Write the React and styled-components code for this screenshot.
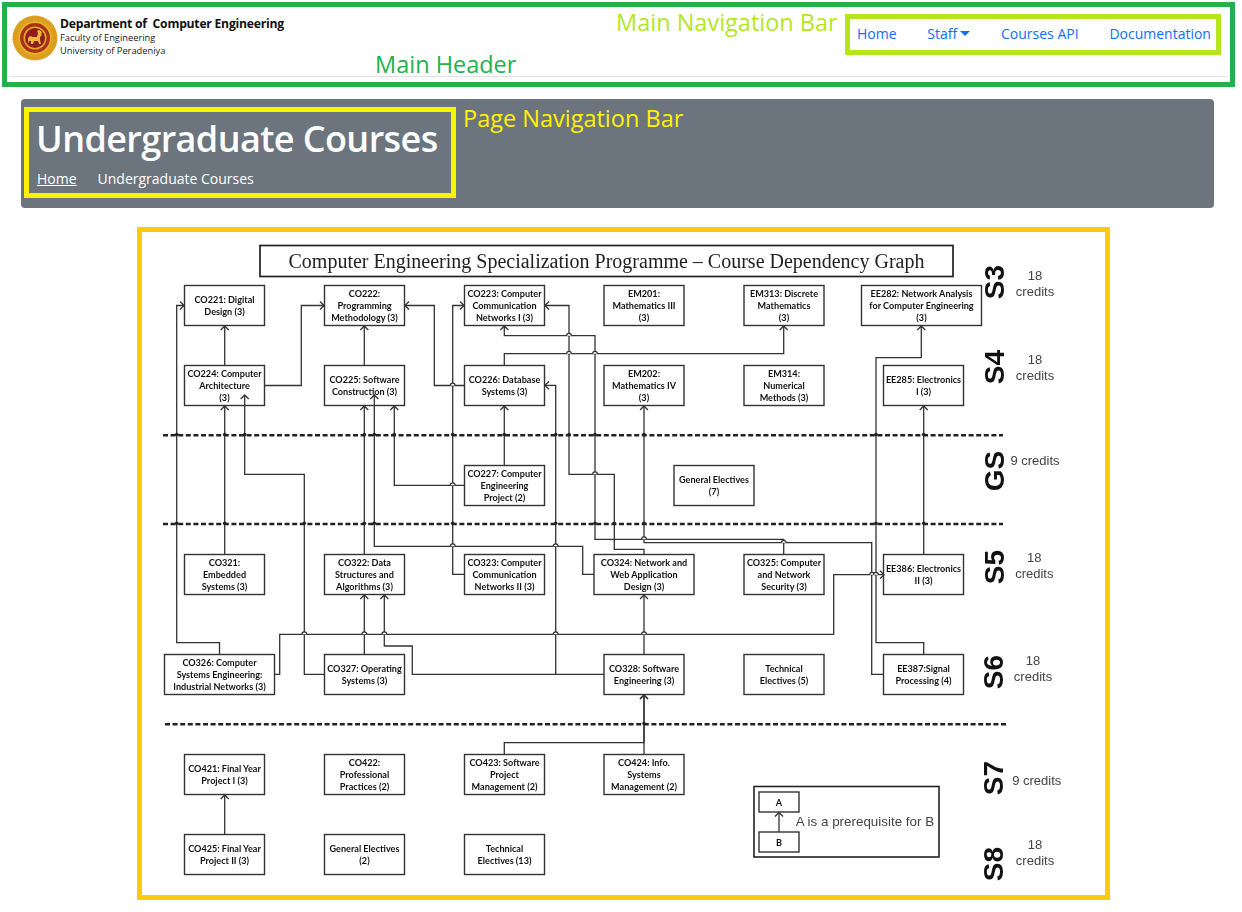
import React from 'react';
import styled, { createGlobalStyle } from 'styled-components';

const GlobalStyle = createGlobalStyle`
  html, body { margin: 0; padding: 0; background: #fff; }
  body { font-family: "Open Sans", "Noto Sans", sans-serif; }
  * { box-sizing: border-box; }
`;

const Page = styled.div`
  width: 1242px;
  height: 912px;
  overflow: hidden;
  padding-top: 2px;
`;

const MainHeader = styled.header`
  position: relative;
  width: 1233px;
  height: 85px;
  margin-left: 2px;
  border: 5px solid #22b14c;
  padding: 0 3px;
`;

const HeaderInner = styled.div`
  display: flex;
  justify-content: space-between;
  align-items: flex-start;
  height: 70px;
  border-bottom: 1px solid #dee2e6;
`;

const Brand = styled.div`
  display: flex;
  gap: 2px;
  padding: 8px 0 0 2px;
`;

const BrandText = styled.div`
  padding-top: 1px;
  color: #222;
  font-size: 9.3px;
  line-height: 13px;
`;

const BrandTitle = styled.div`
  color: #111;
  font-size: 12.2px;
  font-weight: 700;
  line-height: 15px;
  letter-spacing: -0.25px;
  white-space: pre;
`;

const NavBar = styled.nav`
  display: flex;
  align-items: center;
  justify-content: space-between;
  width: 376px;
  height: 41px;
  margin: 7px 6px 0 0;
  padding: 0 5px 3px 7px;
  border: 5px solid #b5e61d;
`;

const NavLink = styled.a`
  display: flex;
  align-items: center;
  gap: 3px;
  color: #0d6efd;
  font-size: 14px;
  white-space: nowrap;
`;

const Caret = styled.span`
  width: 0;
  height: 0;
  border-top: 5px solid #0d6efd;
  border-left: 5px solid transparent;
  border-right: 5px solid transparent;
`;

const Note = styled.div`
  position: absolute;
  color: ${(p) => p.$color};
  font-size: 23.5px;
  line-height: 30px;
  white-space: nowrap;
`;

const HeaderNote = styled(Note)`
  left: 368px;
  top: 42px;
`;

const NavNote = styled(Note)`
  left: 609px;
  top: 0;
`;

const BarNote = styled(Note)`
  left: 442px;
  top: 4px;
`;

const PageBar = styled.section`
  position: relative;
  width: 1193px;
  height: 109px;
  margin: 12px 0 0 21px;
  padding: 8px 0 0 3px;
  border-radius: 4px;
  background: #6c757d;
`;

const TitleBox = styled.div`
  width: 432px;
  height: 91px;
  padding: 6px 0 0 8px;
  border: 5px solid #fff200;
`;

const PageTitle = styled.h1`
  margin: 0 0 0 -1px;
  color: #fff;
  font-size: 36px;
  font-weight: 600;
  line-height: 42px;
  letter-spacing: -0.6px;
  white-space: nowrap;
`;

const Crumbs = styled.div`
  display: flex;
  gap: 21px;
  margin-top: 9px;
  color: #fff;
  font-size: 14px;
  line-height: 20px;
`;

const CrumbLink = styled.a`
  color: #fff;
  text-decoration: underline;
`;

const GraphFrame = styled.figure`
  width: 973px;
  height: 673px;
  margin: 19px 0 0 137px;
  border: 5px solid #ffc90e;
  background: #fff;
`;

const GraphSvg = styled.svg`
  display: block;
  width: 963px;
  height: 663px;
  filter: blur(0.35px);
`;

const CourseText = styled.text`
  fill: #111;
  font-family: Lato, "Open Sans", sans-serif;
  font-size: 9.1px;
  font-weight: 700;
  text-anchor: middle;
`;

const GraphTitle = styled.text`
  fill: #222;
  font-family: "Liberation Serif", serif;
  font-size: 20px;
  text-anchor: middle;
`;

const SemesterText = styled.text`
  fill: #111;
  font-family: "Liberation Sans", sans-serif;
  font-size: 28px;
  font-weight: 700;
  text-anchor: middle;
  dominant-baseline: central;
`;

const CreditText = styled.text`
  fill: #444;
  font-family: "Liberation Sans", sans-serif;
  font-size: 13px;
  text-anchor: middle;
  dominant-baseline: central;
`;

const LegendText = styled.text`
  fill: #444;
  font-family: "Liberation Sans", sans-serif;
  font-size: 13.4px;
  dominant-baseline: central;
`;

const col = [184.5, 324.5, 464.5, 604, 744];
const row = [285.5, 365.5, 465.5, 554.5, 654.5, 754.5, 834.5];

const courses = [
  { x: col[0], y: row[0], lines: ['CO221: Digital', 'Design (3)'] },
  { x: col[1], y: row[0], lines: ['CO222:', 'Programming', 'Methodology (3)'] },
  { x: col[2], y: row[0], lines: ['CO223: Computer', 'Communication', 'Networks I (3)'] },
  { x: col[3], y: row[0], lines: ['EM201:', 'Mathematics III', '(3)'] },
  { x: col[4], y: row[0], lines: ['EM313: Discrete', 'Mathematics', '(3)'] },
  { x: 861.5, y: row[0], w: 120, lines: ['EE282: Network Analysis', 'for Computer Engineering', '(3)'] },
  { x: col[0], y: row[1], lines: ['CO224: Computer', 'Architecture', '(3)'] },
  { x: col[1], y: row[1], lines: ['CO225: Software', 'Construction (3)'] },
  { x: col[2], y: row[1], lines: ['CO226: Database', 'Systems (3)'] },
  { x: col[3], y: row[1], lines: ['EM202:', 'Mathematics IV', '(3)'] },
  { x: col[4], y: row[1], lines: ['EM314:', 'Numerical', 'Methods (3)'] },
  { x: 883.5, y: row[1], lines: ['EE285: Electronics', 'I (3)'] },
  { x: col[2], y: row[2], lines: ['CO227: Computer', 'Engineering', 'Project (2)'] },
  { x: 674, y: row[2], lines: ['General Electives', '(7)'] },
  { x: col[0], y: row[3], lines: ['CO321:', 'Embedded', 'Systems (3)'] },
  { x: col[1], y: row[3], lines: ['CO322: Data', 'Structures and', 'Algorithms (3)'] },
  { x: col[2], y: row[3], lines: ['CO323: Computer', 'Communication', 'Networks II (3)'] },
  { x: col[3] - 10, y: row[3], lines: ['CO324: Network and', 'Web Application', 'Design (3)'], w: 100 },
  { x: col[4], y: row[3], lines: ['CO325: Computer', 'and Network', 'Security (3)'] },
  { x: 883.5, y: row[3], lines: ['EE386: Electronics', 'II (3)'] },
  { x: 164.5, y: row[4], w: 110, lines: ['CO326: Computer', 'Systems Engineering:', 'Industrial Networks (3)'] },
  { x: col[1], y: row[4], lines: ['CO327: Operating', 'Systems (3)'] },
  { x: col[3], y: row[4], lines: ['CO328: Software', 'Engineering (3)'] },
  { x: col[4], y: row[4], lines: ['Technical', 'Electives (5)'] },
  { x: 883.5, y: row[4], lines: ['EE387:Signal', 'Processing (4)'] },
  { x: col[0], y: row[5], lines: ['CO421: Final Year', 'Project I (3)'] },
  { x: col[1], y: row[5], lines: ['CO422:', 'Professional', 'Practices (2)'] },
  { x: col[2], y: row[5], lines: ['CO423: Software', 'Project', 'Management (2)'] },
  { x: col[3], y: row[5], lines: ['CO424: Info.', 'Systems', 'Management (2)'] },
  { x: col[0], y: row[6], lines: ['CO425: Final Year', 'Project II (3)'] },
  { x: col[1], y: row[6], lines: ['General Electives', '(2)'] },
  { x: col[2], y: row[6], lines: ['Technical', 'Electives (13)'] },
];

// every wire ends in the course it points at, [x, y] pairs in page pixels
const wires = [
  [[219.5, 654], [219.5, 642.7], [176.7, 642.7], [176.7, 305.5], [184, 305.5]],
  [[224.7, 365], [224.7, 326]],
  [[265, 385.5], [301.3, 385.5], [301.3, 305.5], [324, 305.5]],
  [[364.3, 365], [364.3, 326]],
  [[464, 385.5], [434.3, 385.5], [434.3, 305.5], [405, 305.5]],
  [[464, 574.3], [452.7, 574.3], [452.7, 305.5], [464, 305.5]],
  [[644, 554], [644, 549.3], [614.3, 549.3], [614.3, 474.3], [569, 474.3], [569, 305.5], [545, 305.5]],
  [[783.7, 554], [783.7, 539.3], [595, 539.3], [595, 335.7], [504.3, 335.7], [504.3, 326]],
  [[884, 674.3], [871.7, 674.3], [871.7, 542.7], [644, 542.7], [644, 406]],
  [[923.7, 654], [923.7, 642.7], [876, 642.7], [876, 357.7], [921.3, 357.7], [921.3, 326]],
  [[923.7, 554], [923.7, 406]],
  [[275, 674.3], [279.7, 674.3], [279.7, 634.3], [833.7, 634.3], [833.7, 574.7], [884, 574.7]],
  [[324, 674.3], [304.3, 674.3], [304.3, 474.3], [244.7, 474.3], [244.7, 395]],
  [[224.7, 554], [224.7, 406]],
  [[364.3, 554], [364.3, 406]],
  [[594, 574.3], [582.7, 574.3], [582.7, 546.3], [374.3, 546.3], [374.3, 395]],
  [[464, 485.3], [394.3, 485.3], [394.3, 406]],
  [[504.3, 465], [504.3, 406]],
  [[555.7, 674.3], [555.7, 385.3], [545, 385.3]],
  [[604, 674.3], [412.3, 674.3], [412.3, 646], [384.3, 646], [384.3, 595]],
  [[364.3, 654], [364.3, 595]],
  [[644, 654], [644, 595]],
  [[644, 754], [644, 695]],
  [[504.3, 754], [504.3, 742.7], [644, 742.7], [644, 695]],
  [[224.7, 834], [224.7, 795]],
  [[504.3, 365], [504.3, 353.7], [783.7, 353.7], [783.7, 326]],
];

const crossings = [
  [452.7, 385.5], [569, 335.7], [569, 353.7], [595, 353.7], [452.7, 485.3], [595, 474.3],
  [452.7, 546.3], [555.7, 546.3], [304.3, 634.3], [364.3, 634.3], [384.3, 634.3],
  [555.7, 634.3], [644, 634.3], [644, 539.3], [783.7, 542.7], [872, 574.7], [876, 574.7],
];

const dashCrossings = [
  [435.3, [176.7, 224.7, 244.7, 364.3, 374.3, 394.3, 452.7, 504.3, 555.7, 569, 595, 644, 876, 923.7]],
  [524, [176.7, 224.7, 304.3, 364.3, 374.3, 452.7, 555.7, 595, 614.3, 644, 876, 923.7]],
  [724.3, [644]],
];

const semesters = [
  { label: 'S3', x: 994, y: 282 },
  { label: 'S4', x: 994, y: 367 },
  { label: 'GS', x: 994, y: 471 },
  { label: 'S5', x: 994, y: 567 },
  { label: 'S6', x: 993, y: 672 },
  { label: 'S7', x: 993, y: 778 },
  { label: 'S8', x: 993, y: 864 },
];

const credits = [
  { x: 1035, y: 275, lines: ['18', 'credits'] },
  { x: 1035, y: 359.7, lines: ['18', 'credits'] },
  { x: 1035, y: 460.7, lines: ['9 credits'] },
  { x: 1034.3, y: 557, lines: ['18', 'credits'] },
  { x: 1033, y: 660, lines: ['18', 'credits'] },
  { x: 1036.7, y: 780.3, lines: ['9 credits'] },
  { x: 1035, y: 844.3, lines: ['18', 'credits'] },
];

const Wire = ({ points }) => {
  const [tx, ty] = points[points.length - 1];
  const [px, py] = points[points.length - 2];
  const dx = Math.sign(tx - px);
  const dy = Math.sign(ty - py);
  const head = [
    [tx - dx * 4 - dy * 4, ty - dy * 4 - dx * 4],
    [tx, ty],
    [tx - dx * 4 + dy * 4, ty - dy * 4 + dx * 4],
  ];
  return (
    <g fill="none" stroke="#333" strokeWidth="1.3">
      <polyline points={points.map((p) => p.join(',')).join(' ')} />
      <polyline points={head.map((p) => p.join(',')).join(' ')} />
    </g>
  );
};

const Course = ({ x, y, w = 80, h = 40, lines }) => {
  const first = y + h / 2 + 3.5 - ((lines.length - 1) * 12) / 2;
  return (
    <g>
      <rect x={x} y={y} width={w} height={h} fill="#fff" stroke="#333" strokeWidth="1.4" />
      {lines.map((line, i) => (
        <CourseText key={line} x={x + w / 2} y={first + i * 12}>
          {line}
        </CourseText>
      ))}
    </g>
  );
};

const Seal = () => (
  <svg width="46" height="46" viewBox="0 0 46 46">
    <circle cx="23" cy="23" r="22.5" fill="#dfa21f" />
    <circle cx="23" cy="23" r="20" fill="none" stroke="#c98a1a" strokeWidth="1" strokeDasharray="1.5 1.5" />
    <circle cx="23" cy="23" r="16.5" fill="#e8b32c" />
    <circle cx="23" cy="23" r="15" fill="#a8321a" />
    <circle cx="23" cy="23" r="11.5" fill="#e3a826" />
    <circle cx="23" cy="23" r="10" fill="#8f1d1c" />
    <path
      d="M16 29v-6l2-2 3 1h4l1-4-1-2 2-1 2 1 1 2-1 1 1 1-2 2v3l1 4h-2l-1-3-4 0-1 3h-2v-3l-2 0-1 3z"
      fill="#eab83c"
    />
  </svg>
);

const Graph = () => (
  <GraphSvg viewBox="142 232 963 663">
    <rect x="260" y="245.5" width="693" height="31" fill="none" stroke="#222" strokeWidth="1.7" />
    <GraphTitle x="606.5" y="267.5">
      Computer Engineering Specialization Programme – Course Dependency Graph
    </GraphTitle>

    <g stroke="#222" strokeWidth="2.4" strokeDasharray="5 2.6">
      <line x1="163" y1="435.3" x2="1003" y2="435.3" />
      <line x1="163" y1="524" x2="1003" y2="524" />
      <line x1="165" y1="724.3" x2="1007" y2="724.3" />
    </g>

    {courses.map((c) => (
      <Course key={c.lines[0] + c.y} {...c} />
    ))}

    {wires.map((points, i) => (
      <Wire key={i} points={points} />
    ))}

    <g fill="#fff" stroke="#333" strokeWidth="1.2">
      {crossings.map(([x, y]) => (
        <path key={`${x}-${y}`} d={`M${x - 2.4} ${y}A2.4 2.4 0 0 1 ${x + 2.4} ${y}`} />
      ))}
    </g>
    <g fill="#222">
      {dashCrossings.map(([y, xs]) =>
        xs.map((x) => <circle key={`${x}-${y}`} cx={x} cy={y - 0.8} r="1.8" />),
      )}
    </g>

    {semesters.map((s) => (
      <SemesterText key={s.label} x={s.x} y={s.y} transform={`rotate(-90 ${s.x} ${s.y})`}>
        {s.label}
      </SemesterText>
    ))}
    {credits.map((c) =>
      c.lines.map((line, i) => (
        <CreditText key={line + c.y} x={c.x} y={c.y + i * 16}>
          {line}
        </CreditText>
      )),
    )}

    <rect x="754" y="786.5" width="185" height="70.5" fill="none" stroke="#222" strokeWidth="1.6" />
    <Course x={759} y={792} w={40} h={20} lines={['A']} />
    <Course x={759} y={832} w={40} h={20} lines={['B']} />
    <Wire points={[[779, 832], [779, 812.5]]} />
    <LegendText x="795.7" y="821">A is a prerequisite for B</LegendText>
  </GraphSvg>
);

export default function App() {
  return (
    <Page>
      <GlobalStyle />
      <MainHeader>
        <HeaderInner>
          <Brand>
            <Seal />
            <BrandText>
              <BrandTitle>Department of  Computer Engineering</BrandTitle>
              <div>Faculty of Engineering</div>
              <div>University of Peradeniya</div>
            </BrandText>
          </Brand>
          <NavBar>
            <NavLink>Home</NavLink>
            <NavLink>
              Staff
              <Caret />
            </NavLink>
            <NavLink>Courses API</NavLink>
            <NavLink>Documentation</NavLink>
          </NavBar>
        </HeaderInner>
        <HeaderNote $color="#22b14c">Main Header</HeaderNote>
        <NavNote $color="#b5e61d">Main Navigation Bar</NavNote>
      </MainHeader>

      <PageBar>
        <TitleBox>
          <PageTitle>Undergraduate Courses</PageTitle>
          <Crumbs>
            <CrumbLink>Home</CrumbLink>
            <span>Undergraduate Courses</span>
          </Crumbs>
        </TitleBox>
        <BarNote $color="#fff200">Page Navigation Bar</BarNote>
      </PageBar>

      <GraphFrame>
        <Graph />
      </GraphFrame>
    </Page>
  );
}
